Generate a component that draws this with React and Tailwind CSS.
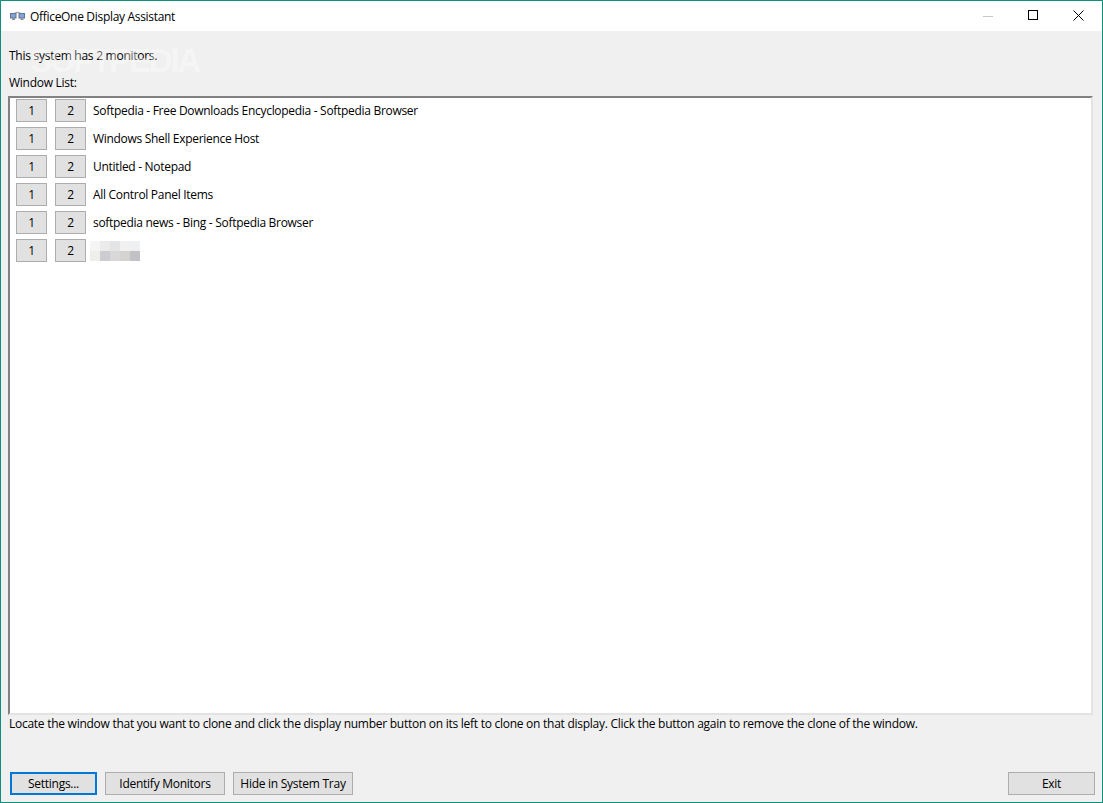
const rows = [
  "Softpedia - Free Downloads Encyclopedia - Softpedia Browser",
  "Windows Shell Experience Host",
  "Untitled - Notepad",
  "All Control Panel Items",
  "softpedia news - Bing - Softpedia Browser",
  "",
];
const blur = ["bg-[#f5f5f5]","bg-[#ebebeb]","bg-[#e3e4e6]","bg-[#f1f1f1]","bg-[#eef0f1]","bg-[#eeeeec]","bg-[#cdcdd1]","bg-[#d8d8d8]","bg-[#d5d2d2]","bg-[#c2c2c6]"];

function Btn({ children, className = "border border-[#adadad]" }) {
  return (
    <button className={`h-[23px] bg-[#e1e1e1] text-[12px] leading-[20px] text-black flex items-center justify-center ${className}`}>
      {children}
    </button>
  );
}

function AppIcon() {
  return (
    <svg width="15" height="10" viewBox="0 0 15 10" className="shrink-0">
      <path d="M4 2.5 Q7.5 0 11 2.5" fill="none" stroke="#8a8a8a" strokeWidth="1" />
      <rect x="0.5" y="2.5" width="5.5" height="4.5" fill="#7fa6dc" stroke="#66758a" />
      <rect x="9" y="2.5" width="5.5" height="4.5" fill="#7fa6dc" stroke="#66758a" />
      <rect x="2" y="7.5" width="3" height="1.5" fill="#8a8a8a" />
      <rect x="10.5" y="7.5" width="3" height="1.5" fill="#8a8a8a" />
    </svg>
  );
}

export default function App() {
  return (
    <div className="relative w-[1103px] h-[803px] flex flex-col border border-[#0f8f7e] bg-[#f0f0f0] text-black text-[12px] overflow-hidden font-['Open_Sans','Noto_Sans',sans-serif] tracking-[-0.265px]">
      <div className="h-[30px] shrink-0 bg-white flex items-center">
        <div className="ml-[9px]"><AppIcon /></div>
        <span className="ml-[5px] mt-[1px] tracking-[-0.31px]">OfficeOne Display Assistant</span>
        <div className="ml-auto flex items-center h-full">
          <svg width="45" height="30" viewBox="0 0 45 30"><path d="M17 15.5h10" stroke="#c8c8c8" /></svg>
          <svg width="45" height="30" viewBox="0 0 45 30"><rect x="17.5" y="9.5" width="9" height="9" fill="none" stroke="#000" /></svg>
          <svg width="45" height="30" viewBox="0 0 45 30" className="mr-[1px]"><path d="M17.5 9.5l10 10M27.5 9.5l-10 10" stroke="#000" /></svg>
        </div>
      </div>

      <div className="flex-1 flex flex-col min-h-0 pl-[7px] pr-[9px]">
        <div className="mt-[16px] ml-[1px] h-[18px] leading-[18px]">This system has 2 monitors.</div>
        <div className="mt-[9px] ml-[1px] h-[18px] leading-[18px]">Window List:</div>
        <div className="mt-[4px] h-[619px] bg-white border-2 border-t-[#828282] border-l-[#828282] border-r-[#e3e3e3] border-b-[#e3e3e3] pt-[1px] pl-[6px] flex flex-col gap-[5px]">
          {rows.map((t, i) => (
            <div key={i} className="flex items-center h-[23px]">
              <Btn className="w-[31px] border border-[#adadad]">1</Btn>
              <Btn className="w-[31px] ml-[8px] border border-[#adadad]">2</Btn>
              {t ? (
                <span className="ml-[7px] mt-[1px] tracking-[-0.3px]">{t}</span>
              ) : (
                <div className="ml-[4px] grid grid-cols-5 w-[50px] h-[20px]">
                  {blur.map((b, j) => <div key={j} className={b} />)}
                </div>
              )}
            </div>
          ))}
        </div>
        <div className="h-[18px] leading-[18px] ml-[1px]">Locate the window that you want to clone and click the display number button on its left to clone on that display. Click the button again to remove the clone of the window.</div>
        <div className="mt-[39px] flex ml-[2px] mr-[-2px] h-[23px]">
          <Btn className="w-[87px] border-2 border-[#0078d7]">Settings...</Btn>
          <Btn className="w-[120px] ml-[8px] border border-[#adadad]">Identify Monitors</Btn>
          <Btn className="w-[120px] ml-[8px] border border-[#adadad]">Hide in System Tray</Btn>
          <Btn className="w-[87px] ml-auto border border-[#adadad]">Exit</Btn>
        </div>
      </div>

      <div className="absolute left-[29px] top-[41px] text-[33px] font-bold leading-[38px] tracking-[-2.2px] font-['Liberation_Sans',sans-serif] text-white/40 pointer-events-none">SOFTPEDIA</div>
    </div>
  );
}
